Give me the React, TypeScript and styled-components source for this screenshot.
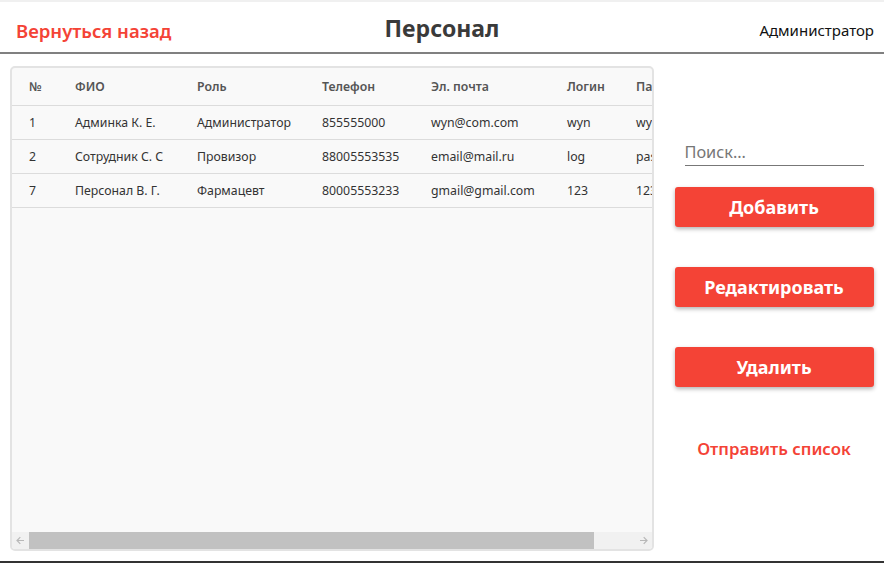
import React from "react";
import styled, { createGlobalStyle } from "styled-components";

const Global = createGlobalStyle`
  html, body { margin: 0; padding: 0; background: #fff; }
  body { font-family: "Noto Sans", "Open Sans", sans-serif; }
  * { box-sizing: border-box; }
`;

const Page = styled.div`
  width: 884px;
  height: 563px;
  display: flex;
  flex-direction: column;
  border-top: 2px solid #f0f0f0;
  border-bottom: 2px solid #333;
  overflow: hidden;
`;

const Header = styled.header`
  height: 52px;
  flex: 0 0 auto;
  display: grid;
  grid-template-columns: 1fr auto 1fr;
  align-items: center;
  border-bottom: 2px solid #808080;
  padding: 0 10px;
`;

const BackLink = styled.a`
  color: #f44336;
  font-size: 18.5px;
  font-weight: 600;
  text-decoration: none;
  justify-self: start;
  padding: 7px 0 0 6px;
`;

const Title = styled.h1`
  margin: 0;
  font-size: 23px;
  font-weight: 700;
  color: #3a3a3a;
  padding-top: 2px;
`;

const UserName = styled.div`
  justify-self: end;
  font-size: 15px;
  color: #111;
  padding-top: 6px;
`;

const Main = styled.main`
  flex: 1;
  display: flex;
  padding: 12px 0 10px 10px;
  min-height: 0;
`;

const TablePanel = styled.section`
  width: 644px;
  display: flex;
  flex-direction: column;
  background: #f9f9f9;
  border: 2px solid #e3e3e3;
  border-radius: 5px;
  overflow: hidden;
`;

const TableArea = styled.div`
  flex: 1;
  overflow: hidden;
`;

const Table = styled.table`
  border-collapse: collapse;
  table-layout: fixed;
  width: 640px;
  font-size: 12.3px;
`;

const Th = styled.th<{ $w: number }>`
  width: ${(p) => p.$w}px;
  height: 37px;
  text-align: left;
  font-weight: 600;
  color: #555;
  padding: 0 0 0 17px;
  border-bottom: 1px solid #dcdcdc;
  white-space: nowrap;
  overflow: hidden;
  text-overflow: clip;
`;

const Td = styled.td`
  height: 34px;
  padding: 0 0 0 17px;
  color: #333;
  border-bottom: 1px solid #dcdcdc;
  white-space: nowrap;
  overflow: hidden;
  text-overflow: clip;
`;

const ScrollBar = styled.div`
  height: 17px;
  display: flex;
  background: #f1f1f1;
`;

const ScrollBtn = styled.div`
  width: 17px;
  display: flex;
  align-items: center;
  justify-content: center;
  color: #b8b8b8;
`;

const Track = styled.div`
  flex: 1;
  display: flex;
`;

const Thumb = styled.div`
  background: #c1c1c1;
  height: 100%;
`;

const Side = styled.aside`
  flex: 1;
  display: flex;
  flex-direction: column;
  align-items: center;
  padding: 72px 10px 0 20px;
`;

const Search = styled.input`
  width: 179px;
  height: 28px;
  border: none;
  border-bottom: 1px solid #777;
  background: transparent;
  font-family: inherit;
  font-size: 16.3px;
  padding: 0;
  color: #333;
  outline: none;
  margin-bottom: 21px;
  &::placeholder { color: #767676; }
`;

const Button = styled.button`
  width: 199px;
  height: 40px;
  flex: 0 0 auto;
  background: #f44336;
  color: #fff;
  border: none;
  border-radius: 3px;
  box-shadow: 0 2px 4px rgba(0, 0, 0, 0.3);
  font-family: inherit;
  font-size: 18px;
  font-weight: 700;
  margin-bottom: 40px;
  cursor: pointer;
`;

const SendLink = styled.a`
  margin-top: 10px;
  color: #f44336;
  font-size: 16.8px;
  font-weight: 600;
  text-decoration: none;
`;

const Arrow = ({ dir }: { dir: "left" | "right" }) => (
  <svg width="9" height="9" viewBox="0 0 9 9" fill="none" stroke="currentColor" strokeWidth="1.2">
    {dir === "left" ? (
      <>
        <path d="M8 4.5H1" />
        <path d="M4.3 1.2L1 4.5l3.3 3.3" />
      </>
    ) : (
      <>
        <path d="M1 4.5h7" />
        <path d="M4.7 1.2L8 4.5 4.7 7.8" />
      </>
    )}
  </svg>
);

const cols = [
  { title: "№", w: 46 },
  { title: "ФИО", w: 122 },
  { title: "Роль", w: 125 },
  { title: "Телефон", w: 109 },
  { title: "Эл. почта", w: 136 },
  { title: "Логин", w: 69 },
  { title: "Пароль", w: 33 },
];

const rows = [
  ["1", "Админка К. Е.", "Администратор", "855555000", "wyn@com.com", "wyn", "wyn"],
  ["2", "Сотрудник С. С", "Провизор", "88005553535", "email@mail.ru", "log", "pass"],
  ["7", "Персонал В. Г.", "Фармацевт", "80005553233", "gmail@gmail.com", "123", "123"],
];

export default function App() {
  return (
    <>
      <Global />
      <Page>
        <Header>
          <BackLink href="#">Вернуться назад</BackLink>
          <Title>Персонал</Title>
          <UserName>Администратор</UserName>
        </Header>
        <Main>
          <TablePanel>
            <TableArea>
              <Table>
                <thead>
                  <tr>
                    {cols.map((c) => (
                      <Th key={c.title} $w={c.w}>
                        {c.title}
                      </Th>
                    ))}
                  </tr>
                </thead>
                <tbody>
                  {rows.map((r) => (
                    <tr key={r[0]}>
                      {r.map((v, i) => (
                        <Td key={i}>{v}</Td>
                      ))}
                    </tr>
                  ))}
                </tbody>
              </Table>
            </TableArea>
            <ScrollBar>
              <ScrollBtn>
                <Arrow dir="left" />
              </ScrollBtn>
              <Track>
                <Thumb style={{ width: "565px" }} />
              </Track>
              <ScrollBtn>
                <Arrow dir="right" />
              </ScrollBtn>
            </ScrollBar>
          </TablePanel>
          <Side>
            <Search placeholder="Поиск..." />
            <Button>Добавить</Button>
            <Button>Редактировать</Button>
            <Button>Удалить</Button>
            <SendLink href="#">Отправить список</SendLink>
          </Side>
        </Main>
      </Page>
    </>
  );
}
